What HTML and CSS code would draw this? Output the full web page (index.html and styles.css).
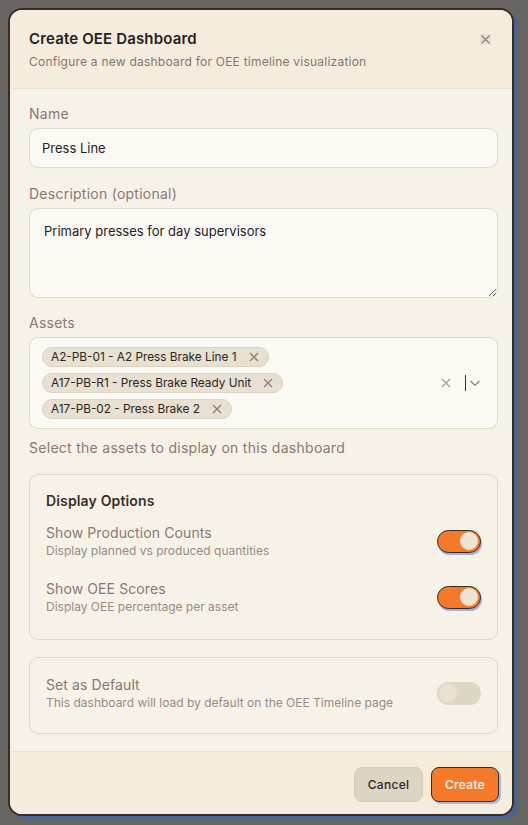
FILE: index.html
```html
<!DOCTYPE html>
<html lang="en">
<head>
    <meta charset="UTF-8">
    <title>Create OEE Dashboard</title>
    <link rel="stylesheet" href="styles.css">
</head>
<body>
<div class="overlay">
    <div class="modal">
        <div class="modal-header">
            <div class="modal-title">Create OEE Dashboard</div>
            <div class="modal-subtitle">Configure a new dashboard for OEE timeline visualization</div>
            <button class="close-button" aria-label="Close">
                <svg width="11" height="11" viewBox="0 0 11 11"><path d="M1.5 1.5l8 8M9.5 1.5l-8 8" stroke="#8c817a" stroke-width="1.3" fill="none"/></svg>
            </button>
        </div>

        <div class="modal-body">
            <div class="field">
                <label class="field-label">Name</label>
                <input class="text-input" type="text" value="Press Line">
            </div>

            <div class="field">
                <label class="field-label">Description (optional)</label>
                <textarea class="text-area">Primary presses for day supervisors</textarea>
            </div>

            <div class="field">
                <label class="field-label">Assets</label>
                <div class="multi-select">
                    <div class="chips">
                        <span class="chip">A2-PB-01 - A2 Press Brake Line 1
                            <svg class="chip-x" width="10" height="10" viewBox="0 0 10 10"><path d="M1 1l8 8M9 1l-8 8" stroke="#8c817a" stroke-width="1.4" fill="none"/></svg></span>
                        <span class="chip">A17-PB-R1 - Press Brake Ready Unit
                            <svg class="chip-x" width="10" height="10" viewBox="0 0 10 10"><path d="M1 1l8 8M9 1l-8 8" stroke="#8c817a" stroke-width="1.4" fill="none"/></svg></span>
                        <span class="chip">A17-PB-02 - Press Brake 2
                            <svg class="chip-x" width="10" height="10" viewBox="0 0 10 10"><path d="M1 1l8 8M9 1l-8 8" stroke="#8c817a" stroke-width="1.4" fill="none"/></svg></span>
                    </div>
                    <div class="select-controls">
                        <svg width="10" height="10" viewBox="0 0 10 10"><path d="M1 1l8 8M9 1l-8 8" stroke="#aaa097" stroke-width="1.4" fill="none"/></svg>
                        <span class="select-divider"></span>
                        <svg width="12" height="12" viewBox="0 0 12 12"><path d="M1.5 4l4.5 4.5 4.5-4.5" stroke="#8c817a" stroke-width="1.2" fill="none"/></svg>
                    </div>
                </div>
                <div class="field-help">Select the assets to display on this dashboard</div>
            </div>

            <div class="option-card">
                <div class="card-title">Display Options</div>
                <div class="option-row">
                    <div>
                        <div class="option-name">Show Production Counts</div>
                        <div class="option-desc">Display planned vs produced quantities</div>
                    </div>
                    <span class="toggle on"><span class="knob"></span></span>
                </div>
                <div class="option-row">
                    <div>
                        <div class="option-name">Show OEE Scores</div>
                        <div class="option-desc">Display OEE percentage per asset</div>
                    </div>
                    <span class="toggle on"><span class="knob"></span></span>
                </div>
            </div>

            <div class="option-card single">
                <div class="option-row">
                    <div>
                        <div class="option-name">Set as Default</div>
                        <div class="option-desc">This dashboard will load by default on the OEE Timeline page</div>
                    </div>
                    <span class="toggle off"><span class="knob"></span></span>
                </div>
            </div>
        </div>

        <div class="modal-footer">
            <button class="cancel-button">Cancel</button>
            <button class="create-button">Create</button>
        </div>
    </div>
</div>
</body>
</html>
```

FILE: styles.css
```css
body, html {
    margin: 0;
    padding: 0;
    height: 100%;
}
body {
    background: #676562;
    font-family: Inter, "Noto Sans", sans-serif;
    color: #2d2421;
}
.overlay {
    padding: 8px 0 0 8px;
}
.modal {
    width: 506px;
    height: 808px;
    border: 2px solid #3b2b26;
    border-radius: 14px;
    background: #f7f2e8;
    box-shadow: 4px 4px 0 #4a6490;
    display: flex;
    flex-direction: column;
    overflow: hidden;
    box-sizing: border-box;
}

/* header */
.modal-header {
    position: relative;
    background: #f5ecdd;
    border-bottom: 1px solid #ebe2d2;
    padding: 19px 20px 18px 19px;
}
.modal-title {
    font-size: 15px;
    font-weight: 600;
    color: #2a211e;
    line-height: 20px;
    letter-spacing: 0.15px;
}
.modal-subtitle {
    font-size: 12px;
    color: #867670;
    margin-top: 5px;
    line-height: 16px;
    letter-spacing: 0.23px;
}
.close-button {
    position: absolute;
    top: 24px;
    right: 21px;
    border: none;
    background: #ebe2d4;
    padding: 0;
    width: 11px;
    height: 11px;
    display: flex;
    align-items: center;
    justify-content: center;
}

/* body */
.modal-body {
    flex-grow: 1;
    padding: 16px 14px 0 19px;
}
.field {
    margin-bottom: 17px;
}
.field-label {
    display: block;
    font-size: 14px;
    color: #8a7871;
    line-height: 18px;
    margin-bottom: 5px;
    letter-spacing: 0.25px;
}
.text-input, .text-area {
    display: block;
    width: 100%;
    box-sizing: border-box;
    background: #fbf9f3;
    border: 1px solid #e2dacb;
    border-radius: 9px;
    font-family: inherit;
    font-size: 13px;
    color: #2a211e;
}
.text-input {
    height: 40px;
    padding: 0 12px;
}
.text-area {
    height: 90px;
    padding: 14px 14px;
    resize: vertical;
    margin-bottom: -1px;
}
.multi-select {
    display: flex;
    align-items: center;
    background: #fbf9f3;
    border: 1px solid #e2dacb;
    border-radius: 9px;
    padding: 9px 16px 9px 12px;
}
.chips {
    flex-grow: 1;
    display: flex;
    flex-direction: column;
    align-items: flex-start;
    gap: 6px;
}
.chip {
    display: inline-flex;
    align-items: center;
    gap: 12px;
    background: #e8e0d0;
    border: 1px solid #dcd3c1;
    border-radius: 10px;
    font-size: 11.8px;
    color: #2e2522;
    height: 20px;
    box-sizing: border-box;
    padding: 0 9px 0 8px;
}
.chip-x {
    display: block;
}
.select-controls {
    display: flex;
    align-items: center;
}
.select-controls svg:first-child {
    margin-right: 14px;
}
.select-divider {
    width: 1px;
    height: 16px;
    background: #3b2b26;
    margin-right: 3px;
}
.field-help {
    font-size: 14px;
    color: #8a7871;
    margin-top: 10px;
    line-height: 18px;
    letter-spacing: 0.28px;
}

/* option cards */
.option-card {
    border: 1px solid #e2dacb;
    border-radius: 9px;
    padding: 17px 16px 3px 16px;
    margin-bottom: 17px;
}
.option-card.single {
    padding-top: 18px;
    padding-bottom: 1px;
}
.card-title {
    font-size: 14px;
    font-weight: 600;
    color: #3a2e2a;
    margin-bottom: 15px;
    letter-spacing: 0.15px;
}
.option-row {
    display: flex;
    justify-content: space-between;
    align-items: center;
    margin-bottom: 22px;
}
.option-name {
    font-size: 14px;
    color: #8a7871;
    line-height: 18px;
    letter-spacing: 0.1px;
}
.option-desc {
    font-size: 12px;
    color: #9a8b84;
    line-height: 15px;
    margin-top: 1px;
}
.toggle {
    display: flex;
    align-items: center;
    width: 44px;
    height: 23px;
    border-radius: 12px;
    box-sizing: border-box;
    padding: 0 2px;
}
.toggle.on {
    background: #f47a2a;
    border: 1px solid #3b2b26;
    box-shadow: 1px 2px 0 #9fb4d8;
    justify-content: flex-end;
}
.toggle.off {
    background: #dfd7c6;
    justify-content: flex-start;
}
.knob {
    width: 18px;
    height: 18px;
    border-radius: 50%;
    background: #ece4d4;
}
.toggle.off .knob {
    background: #e9e1d1;
}

/* footer */
.modal-footer {
    display: flex;
    justify-content: flex-end;
    gap: 8px;
    padding: 15px 13px 12px 20px;
    background: #f5ecdd;
    border-top: 1px solid #ebe2d2;
}
.cancel-button, .create-button {
    font-family: inherit;
    font-size: 12px;
    font-weight: 500;
    height: 35px;
    border-radius: 8px;
    padding: 0;
    cursor: pointer;
    letter-spacing: 0.3px;
}
.cancel-button {
    background: #ddd5c3;
    border: 1px solid #d6cdba;
    color: #2d2421;
    width: 69px;
}
.create-button {
    background: #f47a2a;
    border: 1px solid #3b2b26;
    color: #ffffff;
    width: 68px;
    box-shadow: 2px 2px 0 #a7bbdc;
}
```
